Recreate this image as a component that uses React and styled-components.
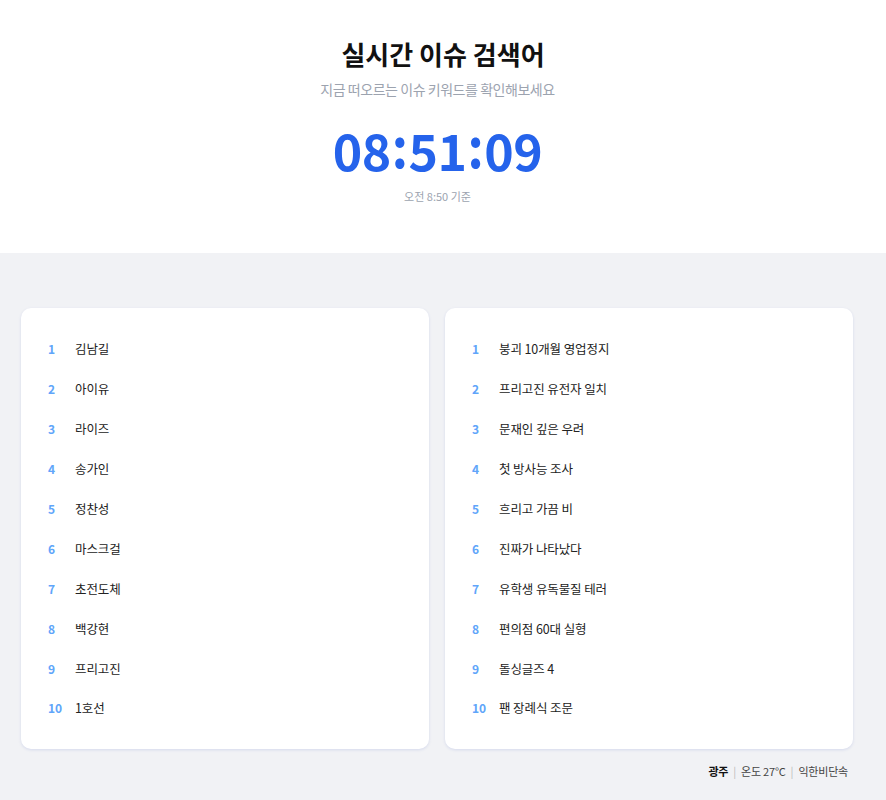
import React from 'react';
import styled, { createGlobalStyle } from 'styled-components';

const Global = createGlobalStyle`
  html, body {
    margin: 0;
    padding: 0;
    background: #f1f2f5;
    font-family: "Noto Sans CJK KR", "Noto Sans", sans-serif;
  }
`;

const Header = styled.header`
  background: #fff;
  height: 253px;
  box-sizing: border-box;
  padding-top: 36px;
  text-align: center;
`;

const Title = styled.h1`
  margin: 0;
  font-size: 26px;
  line-height: 36px;
  font-weight: 700;
  color: #111;
`;

const Subtitle = styled.p`
  margin: 7px 0 0;
  padding-right: 11px;
  font-size: 14px;
  line-height: 20px;
  letter-spacing: -0.45px;
  color: #9ca3af;
`;

const ClockBlock = styled.div`
  padding-right: 11px;
`;

const Clock = styled.div`
  margin-top: 19px;
  font-size: 50px;
  line-height: 62px;
  font-weight: 700;
  color: #2563eb;
  letter-spacing: -0.5px;
`;

const Colon = styled.span`
  display: inline-block;
  margin: 0 1px;
  transform: translateY(-5px) scaleY(1.1);
`;

const Basis = styled.div`
  margin-top: 8px;
  font-size: 11px;
  line-height: 16px;
  color: #9ca3af;
`;

const Main = styled.main`
  padding: 55px 33px 0 21px;
`;

const Grid = styled.div`
  display: grid;
  grid-template-columns: 1fr 1fr;
  gap: 16px;
`;

const Card = styled.ol`
  list-style: none;
  margin: 0;
  background: #fff;
  border-radius: 10px;
  padding: 21px 20px 21px 27px;
  box-shadow: 0 1px 3px rgba(90, 110, 200, 0.18);
`;

const Row = styled.li`
  display: flex;
  align-items: center;
  height: 39.9px;
`;

const Rank = styled.span`
  width: 27px;
  font-size: 12px;
  font-weight: 700;
  color: #60a5fa;
`;

const Keyword = styled.span`
  font-size: 12.5px;
  letter-spacing: -0.1px;
  color: #222;
`;

const Footer = styled.footer`
  display: flex;
  justify-content: flex-end;
  align-items: center;
  gap: 5px;
  padding: 14px 5px 0 0;
  font-size: 11px;
  letter-spacing: -0.2px;
  color: #444;
`;

const City = styled.strong`
  font-weight: 700;
  color: #111;
`;

const Sep = styled.span`
  color: #bbb;
`;

const left = ['김남길', '아이유', '라이즈', '송가인', '정찬성', '마스크걸', '초전도체', '백강현', '프리고진', '1호선'];
const right = ['붕괴 10개월 영업정지', '프리고진 유전자 일치', '문재인 깊은 우려', '첫 방사능 조사', '흐리고 가끔 비', '진짜가 나타났다', '유학생 유독물질 테러', '편의점 60대 실형', '돌싱글즈 4', '팬 장례식 조문'];

function List({ items }) {
  return (
    <Card>
      {items.map((k, i) => (
        <Row key={k}>
          <Rank>{i + 1}</Rank>
          <Keyword>{k}</Keyword>
        </Row>
      ))}
    </Card>
  );
}

export default function App() {
  return (
    <>
      <Global />
      <Header>
        <Title>실시간 이슈 검색어</Title>
        <Subtitle>지금 떠오르는 이슈 키워드를 확인해보세요</Subtitle>
        <ClockBlock>
          <Clock>
            08<Colon>:</Colon>51<Colon>:</Colon>09
          </Clock>
          <Basis>오전 8:50 기준</Basis>
        </ClockBlock>
      </Header>
      <Main>
        <Grid>
          <List items={left} />
          <List items={right} />
        </Grid>
        <Footer>
          <City>광주</City>
          <Sep>|</Sep>
          <span>온도 27°C</span>
          <Sep>|</Sep>
          <span>익한비단속</span>
        </Footer>
      </Main>
    </>
  );
}
